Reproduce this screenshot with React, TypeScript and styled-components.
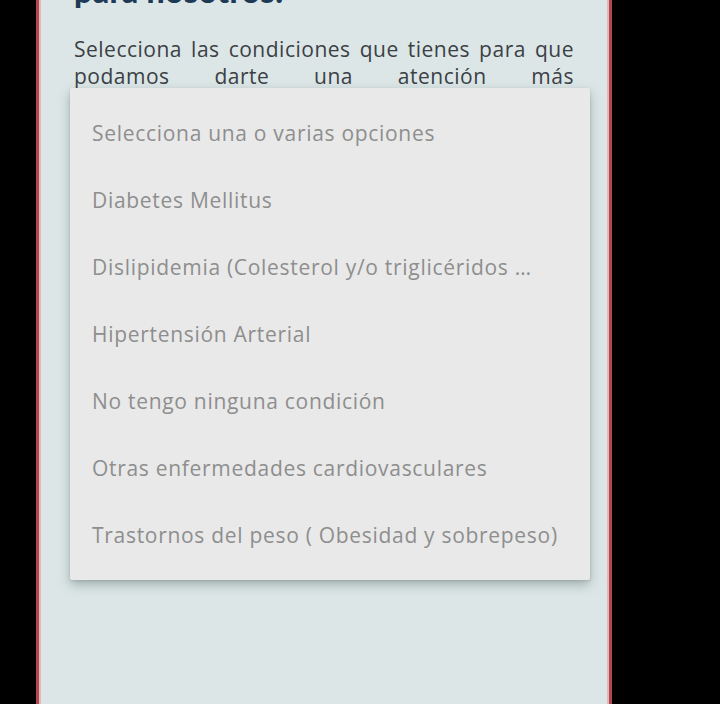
import React from "react";
import styled, { createGlobalStyle } from "styled-components";

const Global = createGlobalStyle`
  html, body { margin: 0; padding: 0; background: #000; }
  body { width: 720px; height: 704px; overflow: hidden; font-family: "Open Sans", Lato, sans-serif; }
`;

const Screen = styled.div`
  width: 720px;
  height: 704px;
  background: #000;
  display: flex;
  padding-left: 36px;
  box-sizing: border-box;
`;

const Panel = styled.div`
  position: relative;
  width: 576px;
  height: 704px;
  box-sizing: border-box;
  background: #dce6e6;
  border-left: 3px solid #b4474d;
  border-right: 3px solid #b4474d;
  box-shadow: inset 2px 0 0 #e2b9bb, inset -2px 0 0 #e2b9bb;
  padding: 0 35px;
  overflow: hidden;
`;

const Title = styled.h2`
  margin: -27px 0 0;
  font-family: Lato, sans-serif;
  font-weight: 900;
  font-size: 32px;
  line-height: 36px;
  color: #1e3a56;
  letter-spacing: 0.4px;
`;

const Intro = styled.p`
  margin: 27px 0 0;
  font-family: "Open Sans", sans-serif;
  font-size: 21px;
  line-height: 27px;
  letter-spacing: 0.5px;
  color: #3b4045;
  text-align: justify;
  text-align-last: justify;
`;

const Menu = styled.ul`
  position: absolute;
  left: 31px;
  top: 88px;
  width: 520px;
  margin: 0;
  padding: 11px 0 12px;
  list-style: none;
  background: #e9e9e9;
  border-radius: 2px;
  box-shadow: 0 5px 12px rgba(60, 80, 80, 0.35), 0 1px 3px rgba(0, 0, 0, 0.12);
`;

const Item = styled.li`
  height: 67px;
  display: flex;
  align-items: center;
  padding: 0 22px;
  font-family: "Open Sans", sans-serif;
  font-size: 21px;
  letter-spacing: 0.7px;
  color: #8e8e8e;
  white-space: nowrap;
`;

const options = [
  "Selecciona una o varias opciones",
  "Diabetes Mellitus",
  "Dislipidemia (Colesterol y/o triglicéridos …",
  "Hipertensión Arterial",
  "No tengo ninguna condición",
  "Otras enfermedades cardiovasculares",
  "Trastornos del peso ( Obesidad y sobrepeso)",
];

export default function App() {
  return (
    <>
      <Global />
      <Screen>
        <Panel>
          <Title>para nosotros:</Title>
          <Intro>
            Selecciona las condiciones que tienes para que
            <br />
            podamos darte una atención más
            <br />
            personalizada.
          </Intro>
          <Menu>
            {options.map((o) => (
              <Item key={o}>{o}</Item>
            ))}
          </Menu>
        </Panel>
      </Screen>
    </>
  );
}
